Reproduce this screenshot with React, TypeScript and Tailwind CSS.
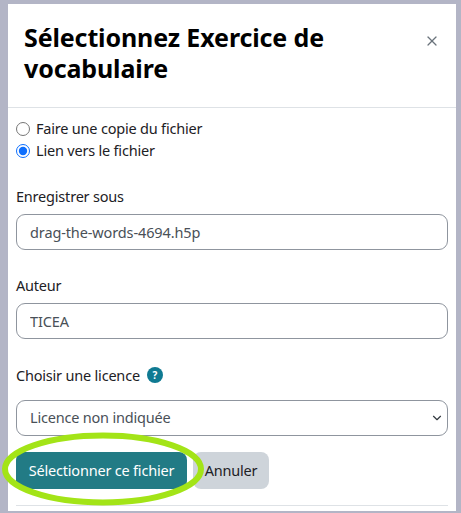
import React from "react";
import { ChevronDown, X } from "lucide-react";

const font = "font-['Noto_Sans','Open_Sans',sans-serif]";

function Field({ label, value }: { label: string; value: string }) {
  return (
    <div className="flex flex-col">
      <label className="text-[14.5px] leading-[22px] tracking-[-0.2px] text-[#1d2125]">{label}</label>
      <input
        readOnly
        value={value}
        className="mt-[7px] h-[36px] w-full rounded-[9px] border border-[#8f959e] bg-white px-[13px] text-[14.5px] tracking-[-0.12px] text-[#495057] outline-none"
      />
    </div>
  );
}

export default function App() {
  return (
    <div className={`relative h-[513px] w-[461px] overflow-hidden bg-[#b3b5c6] pl-[8px] pt-[4px] ${font}`}>
      <div className="flex h-[507px] w-[448px] flex-col bg-white">
        <header className="flex h-[104px] shrink-0 items-start justify-between border-b border-[#dee2e6] pl-[16px] pr-[16px] pt-[18px]">
          <h1 className="w-[330px] text-[25px] font-bold leading-[31px] tracking-[-0.12px] text-black">Sélectionnez Exercice de vocabulaire</h1>
          <button className="mt-[11px] text-[#6a737b]" aria-label="Fermer">
            <X size={16} strokeWidth={1.8} />
          </button>
        </header>
        <div className="flex flex-1 flex-col px-[8px] pt-[10px]">
          <div className="flex flex-col gap-0">
            <label className="flex h-[22px] items-center gap-[6px] text-[14.5px] tracking-[-0.2px] text-[#1d2125]">
              <input type="radio" name="ref" className="m-0 h-[14px] w-[14px] accent-[#0d6efd]" />
              Faire une copie du fichier
            </label>
            <label className="flex h-[22px] items-center gap-[6px] text-[14.5px] tracking-[-0.2px] text-[#1d2125]">
              <input type="radio" name="ref" defaultChecked className="m-0 h-[14px] w-[14px] accent-[#0d6efd]" />
              Lien vers le fichier
            </label>
          </div>
          <div className="mt-[23px] flex flex-col gap-[24px]">
            <Field label="Enregistrer sous" value="drag-the-words-4694.h5p" />
            <Field label="Auteur" value="TICEA" />
          </div>
          <div className="mt-[25px] flex items-center gap-[7px] text-[14.5px] leading-[22px] tracking-[-0.2px] text-[#1d2125]">
            <span>Choisir une licence</span>
            <span className="flex h-[16px] w-[16px] items-center justify-center rounded-full bg-[#0f7a92] text-[10px] font-bold leading-none text-white">?</span>
          </div>
          <div className="relative mt-[14px] flex h-[36px] items-center rounded-[9px] border border-[#8f959e] px-[13px] text-[14.5px] tracking-[-0.2px] text-[#495057]">
            <span>Licence non indiquée</span>
            <ChevronDown size={14} strokeWidth={2} className="absolute right-[3px] top-[10px] text-[#343a40]" />
          </div>
          <div className="mt-[16px] flex gap-[6px]">
            <button className="h-[37px] w-[171px] rounded-[8px] bg-[#227b85] text-[14.5px] tracking-[-0.2px] text-white">Sélectionner ce fichier</button>
            <button className="h-[37px] w-[76px] rounded-[8px] bg-[#ced4da] text-[14.5px] tracking-[-0.2px] text-[#1d2125]">Annuler</button>
          </div>
          <div className="mt-[16px] border-t border-[#dee2e6]" />
        </div>
      </div>
      <svg className="pointer-events-none absolute left-0 top-[430px]" width="210" height="80" viewBox="0 0 210 80">
        <ellipse cx="103" cy="39" rx="98" ry="33.5" fill="none" stroke="#a3e417" strokeWidth="6" />
      </svg>
    </div>
  );
}
